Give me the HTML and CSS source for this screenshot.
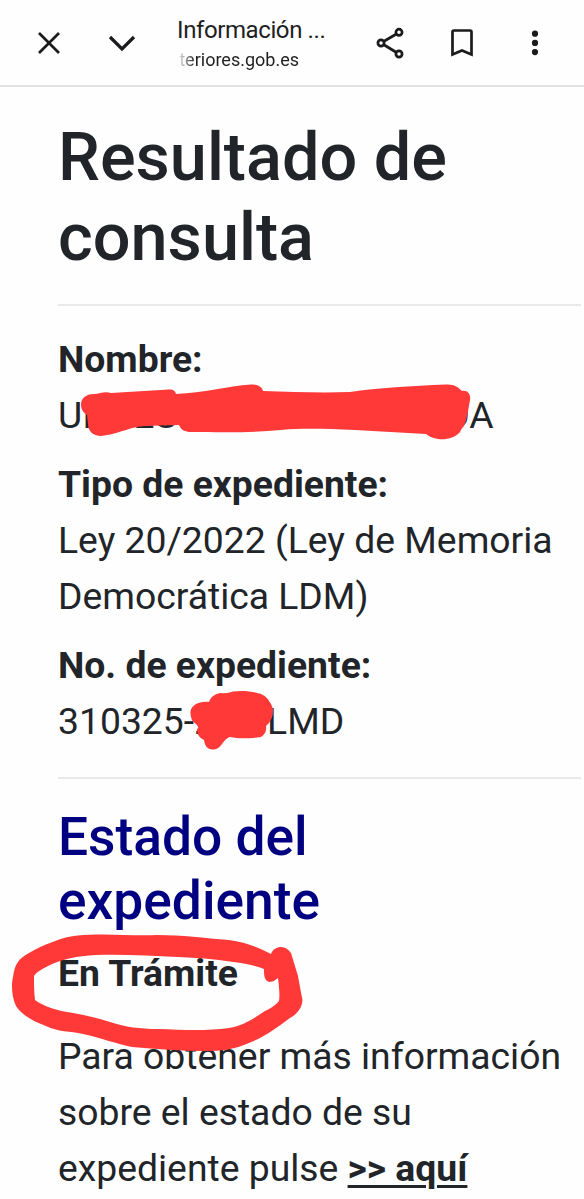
FILE: index.html
```html
<!DOCTYPE html>
<html lang="es">
<head>
    <meta charset="UTF-8">
    <meta name="viewport" content="width=device-width, initial-scale=1.0">
    <title>Información</title>
    <link rel="stylesheet" href="styles.css">
</head>
<body>
    <header class="toolbar">
        <svg class="icon close" viewBox="0 0 24 24"><path d="M2 2L22 22M22 2L2 22"/></svg>
        <svg class="icon chevron" viewBox="0 0 28 18"><path d="M2 3L14 15L26 3"/></svg>
        <div class="page-info">
            <div class="page-title">Información ...</div>
            <div class="page-url"><span>teriores.gob.es</span></div>
        </div>
        <svg class="icon share" viewBox="0 0 30 32">
            <path d="M6 16L24 5.5M6 16L24 27"/>
            <circle class="node" cx="24" cy="5.3" r="3.1"/>
            <circle class="node" cx="6" cy="16" r="3.1"/>
            <circle class="node" cx="24" cy="27" r="3.1"/>
        </svg>
        <svg class="icon bookmark" viewBox="0 0 22 28"><path d="M1.5 25.5V3Q1.5 1.5 3 1.5H19Q20.5 1.5 20.5 3V25.5L11 21.5Z"/></svg>
        <svg class="icon more" viewBox="0 0 8 26">
            <circle cx="4" cy="3.7" r="3.1"/>
            <circle cx="4" cy="12.9" r="3.1"/>
            <circle cx="4" cy="22.1" r="3.1"/>
        </svg>
    </header>

    <main class="content">
        <h1>Resultado de consulta</h1>
        <hr>
        <p>
            <strong>Nombre:</strong><br>
            <span class="field">U<span class="name-start">I</span><span class="name-middle">ES</span><span class="name-end">DA</span></span>
        </p>
        <p>
            <strong>Tipo de expediente:</strong><br>
            Ley 20/2022 (Ley de Memoria Democrática LDM)
        </p>
        <p>
            <strong>No. de expediente:</strong><br>
            <span class="field">310325-<span class="number-hidden">2</span>LMD</span>
        </p>
        <hr class="divider">
        <h2>Estado del expediente</h2>
        <p class="status"><strong>En Trámite</strong></p>
        <p>Para obtener más información sobre el estado de su expediente pulse <a href="#">&gt;&gt; aquí</a></p>
    </main>

    <!-- Red marker strokes over the text -->
    <svg class="marker" viewBox="0 0 584 1199">
        <path d="M81 405C81 398 86 394 94 394C100 394 104 391 111 393L169 389.500Q175 389 176 394C204 393 227 386 251 384.500Q261 384 263 391C292 392 322 393 350 392C378 388 411 386 446 384.500C454 384 458 387 462 391C468 390 471 395 470 400C468 411 467 420 464 426Q461 429 460 432C455 438 446 440 438 439Q431 438 426 434L355 430C327 429 304 428 281 430C251 433 218 432 191 432C185 432 181 430 179 425C162 426 142 424 126 430C116 433 110 435 101 436C93 436 88 431 88 424L87 415Q81 411 81 405Z"/>
        <path d="M190.500 711C192 705 199 701 209 702Q211 695 220 693Q227 694 233 691.500C244 690 256 692 261 694Q269 697 273 709Q274 719 266 726Q267 733 261 737C251 738.500 239 739 230 737Q226 738 222 744Q218 750 212 749.500Q205 749 204 740Q197 737 197 729Q200 728 196 724Q190 721 190.500 711Z"/>
        <path fill-rule="evenodd" d="M271 954C273 949 277 947 281 947Q287 947 291 953L298 976Q301 993 302.500 1000C302 1008 297 1014 290 1018C275 1029 264 1037 249 1043C233 1050 221 1051 204 1051C181 1051 157 1049 132 1047C117 1044 101 1038 83 1034C70 1031 58 1032 46 1026C32 1021 21 1014 16 1006C12 998 11 985 13 977C15 964 18 959 29 953Q41 946 50 943C66 936 78 935 96 934.500C117 934 135 936 157 935C182 935 204 938 229 940C245 942 257 947 271 954ZM34 976Q36 972 48 966C62 959 77 956 96 955C125 954 151 956 178 957C205 958 220 960 241 963Q254 965 264 969C264 975 264 981 270 982Q275 981 278 978C279 986 280 995 279 1001Q274 1007 265 1011C254 1018 244 1026 229 1028C207 1031 185 1030 158 1029C139 1029 126 1027 110 1022Q91 1016 73 1013C57 1011 43 1006 35 1000C34 992 34 984 34 976Z"/>
    </svg>
</body>
</html>
```
FILE: styles.css
```css
* {
    box-sizing: border-box;
}

body {
    margin: 0;
    height: 1199px;
    position: relative;
    overflow: hidden;
    background-color: #fefefe;
    color: #212529;
    font-family: Roboto, "Liberation Sans", sans-serif;
    font-size: 37.3px;
    line-height: 56px;
}

.toolbar {
    display: flex;
    align-items: center;
    height: 87px;
    padding-left: 37px;
    border-bottom: 2px solid #e1e3e5;
}

.icon {
    flex: none;
    fill: none;
    stroke: #1b1b1d;
    stroke-width: 2.7;
}

.close {
    width: 24px;
    height: 24px;
}

.chevron {
    width: 28px;
    height: 18px;
    margin-left: 47px;
    stroke-width: 3.2;
}

.page-info {
    width: 160px;
    margin-left: 41px;
    padding-top: 5px;
    color: #1f1f1f;
}

.page-title {
    font-size: 24px;
    line-height: 30px;
    letter-spacing: -0.4px;
    white-space: nowrap;
}

.page-url {
    width: 122px;
    font-size: 18px;
    line-height: 30px;
    text-align: right;
    white-space: nowrap;
    -webkit-mask-image: linear-gradient(to right, transparent, #000 18px);
    mask-image: linear-gradient(to right, transparent, #000 18px);
}

.share {
    width: 30px;
    height: 32px;
    margin-left: 38px;
}

.node {
    fill: #fefefe;
}

.bookmark {
    width: 22px;
    height: 28px;
    margin-left: 46px;
}

.more {
    width: 8px;
    height: 26px;
    margin-left: 58px;
    fill: #1b1b1d;
    stroke: none;
}

.content {
    padding: 30px 3px 0 58px;
}

h1, h2 {
    margin: 0;
    font-weight: 500;
}

h1 {
    font-size: 66.6px;
    line-height: 80px;
}

h2 {
    width: 300px;
    margin-bottom: 12px;
    color: #000080;
    font-size: 53.3px;
    line-height: 64px;
}

hr {
    height: 2px;
    margin: 27px 0 25px;
    border: none;
    background-color: #e9e9ea;
}

.divider {
    margin: 28px 0 26px;
}

p {
    margin: 0 0 13px;
}

strong, a {
    font-weight: 700;
}

a {
    color: #212529;
    text-decoration: underline;
    text-decoration-thickness: 3px;
    text-underline-offset: 4px;
}

.field {
    display: flex;
}

.name-start {
    width: 51px;
}

.name-middle {
    width: 312px;
}

.number-hidden {
    width: 73px;
}

.status {
    margin-bottom: 27px;
}

.marker {
    position: absolute;
    top: 0;
    left: 0;
    width: 584px;
    height: 1199px;
    fill: #ff3838;
    pointer-events: none;
}
```
